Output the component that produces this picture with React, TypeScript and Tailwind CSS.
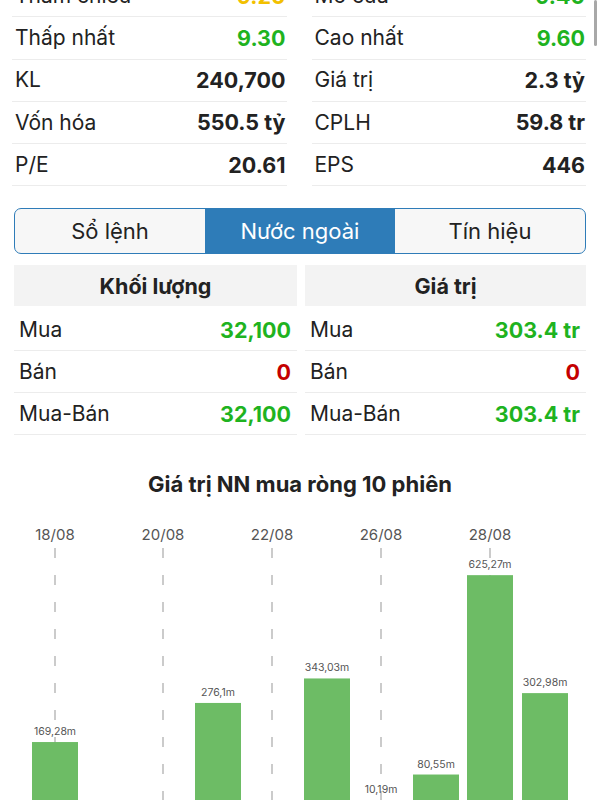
import React from "react";

const font = { fontFamily: "Inter, 'Noto Sans', sans-serif" };

type Stat = { label: string; value: string; color?: string };

const leftStats: Stat[] = [
  { label: "Tham chiếu", value: "9.20", color: "text-[#f2c000]" },
  { label: "Thấp nhất", value: "9.30", color: "text-[#1fb31f]" },
  { label: "KL", value: "240,700" },
  { label: "Vốn hóa", value: "550.5 tỷ" },
  { label: "P/E", value: "20.61" },
];
const rightStats: Stat[] = [
  { label: "Mở cửa", value: "9.40", color: "text-[#1fb31f]" },
  { label: "Cao nhất", value: "9.60", color: "text-[#1fb31f]" },
  { label: "Giá trị", value: "2.3 tỷ" },
  { label: "CPLH", value: "59.8 tr" },
  { label: "EPS", value: "446" },
];

function StatCol({ items }: { items: Stat[] }) {
  return (
    <div className="flex flex-col">
      {items.map((s) => (
        <div
          key={s.label}
          className="h-[42.3px] flex items-center justify-between pl-[3px] pr-[1px] border-b border-[#ececec]"
        >
          <span className="text-[21px] text-[#222]">{s.label}</span>
          <span className={`text-[21.5px] font-bold ${s.color ?? "text-[#222]"}`}>{s.value}</span>
        </div>
      ))}
    </div>
  );
}

type Row = { label: string; value: string; color: string };

function ForeignTable({ title, rows }: { title: string; rows: Row[] }) {
  return (
    <div className="flex flex-col">
      <div className="h-[41px] bg-[#f3f3f3] flex items-center justify-center text-[21.5px] font-bold text-[#222]">
        {title}
      </div>
      <div className="mt-[3px]">
        {rows.map((r) => (
          <div
            key={r.label}
            className="h-[42px] flex items-center justify-between pl-[5px] pr-[6px] border-b border-[#ececec]"
          >
            <span className="text-[21px] text-[#222]">{r.label}</span>
            <span className={`text-[21.5px] font-bold ${r.color}`}>{r.value}</span>
          </div>
        ))}
      </div>
    </div>
  );
}

const bars = [
  { x: 55, v: 169.28, label: "169,28m" },
  { x: 218, v: 276.1, label: "276,1m" },
  { x: 327, v: 343.03, label: "343,03m" },
  { x: 381, v: 10.19, label: "10,19m" },
  { x: 436, v: 80.55, label: "80,55m" },
  { x: 490, v: 625.27, label: "625,27m" },
  { x: 545, v: 302.98, label: "302,98m" },
];
const dates = [
  { x: 55, t: "18/08" },
  { x: 163, t: "20/08" },
  { x: 272, t: "22/08" },
  { x: 381, t: "26/08" },
  { x: 490, t: "28/08" },
];

function Chart() {
  const base = 290;
  const k = 0.366;
  return (
    <svg width="600" height="300" viewBox="0 0 600 300" className="block">
      {dates.map((d) => (
        <g key={d.t}>
          <text x={d.x} y={26} fontSize="15" fill="#555" textAnchor="middle" style={font}>
            {d.t}
          </text>
          <line x1={d.x} x2={d.x} y1={34} y2={300} stroke="#b0b0b0" strokeWidth="1.3" strokeDasharray="10 17" />
        </g>
      ))}
      {bars.map((b) => {
        const h = b.v * k;
        const top = base - h;
        return (
          <g key={b.label}>
            <rect x={b.x - 23} y={top} width={46} height={h + 20} fill="#6dbc65" />
            <text x={b.x} y={top - 7} fontSize="10.5" fill="#555" textAnchor="middle" style={font}>
              {b.label}
            </text>
          </g>
        );
      })}
    </svg>
  );
}

export default function App() {
  return (
    <div className="relative w-[600px] h-[800px] overflow-hidden bg-white" style={font}>
      <div className="absolute right-[3px] top-0 w-[3px] h-[46px] rounded-full bg-[#a8a8a8]" />
      <div className="mt-[-25px] pl-[12px] pr-[14px] grid grid-cols-2 gap-x-[25px]">
        <StatCol items={leftStats} />
        <StatCol items={rightStats} />
      </div>

      <div className="mx-[14px] mt-[22px] h-[46px] rounded-[7px] border-[1.5px] border-[#2f7cb8] grid grid-cols-3 overflow-hidden bg-[#f7f7f7]">
        <div className="flex items-center justify-center text-[22px] text-[#222]">Sổ lệnh</div>
        <div className="flex items-center justify-center text-[22px] text-white bg-[#2e7cb8]">Nước ngoài</div>
        <div className="flex items-center justify-center text-[22px] text-[#222]">Tín hiệu</div>
      </div>

      <div className="mx-[14px] mt-[11px] grid grid-cols-[283px_1fr] gap-x-[8px]">
        <ForeignTable
          title="Khối lượng"
          rows={[
            { label: "Mua", value: "32,100", color: "text-[#1fb31f]" },
            { label: "Bán", value: "0", color: "text-[#c40000]" },
            { label: "Mua-Bán", value: "32,100", color: "text-[#1fb31f]" },
          ]}
        />
        <ForeignTable
          title="Giá trị"
          rows={[
            { label: "Mua", value: "303.4 tr", color: "text-[#1fb31f]" },
            { label: "Bán", value: "0", color: "text-[#c40000]" },
            { label: "Mua-Bán", value: "303.4 tr", color: "text-[#1fb31f]" },
          ]}
        />
      </div>

      <div className="mt-[33px] text-center text-[22px] font-bold text-[#222]">
        Giá trị NN mua ròng 10 phiên
      </div>
      <div className="mt-[13px]">
        <Chart />
      </div>
    </div>
  );
}
